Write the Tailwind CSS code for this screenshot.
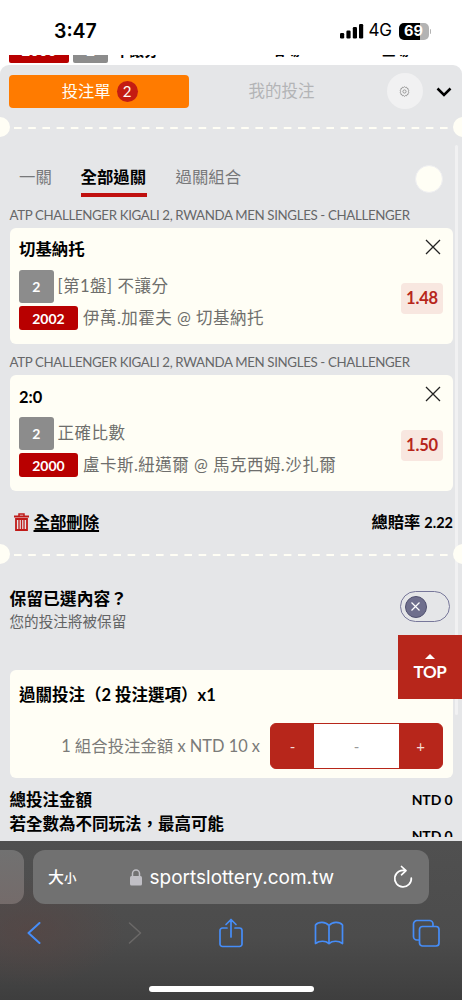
<!DOCTYPE html>
<html lang="zh-Hant">
<head>
<meta charset="utf-8">
<title>投注單</title>
<script src="https://cdn.jsdelivr.net/npm/@tailwindcss/browser@4"></script>
</head>
<body class="w-[462px] h-[1000px] overflow-hidden bg-white font-['Lato','Noto_Sans_CJK_TC',sans-serif] text-black">
<div class="flex h-[1000px] w-[462px] flex-col overflow-hidden whitespace-nowrap">

  <!-- Status bar -->
  <header class="flex h-[55px] shrink-0 items-center pl-[54px] pr-[31px] pt-[7px] font-['Inter',sans-serif]">
    <span class="mt-[2px] text-[19.5px] font-semibold">3:47</span>
    <svg class="ml-auto" width="24" height="16" viewBox="0 0 24 16"><rect x="0" y="10" width="4.2" height="5.5" rx="1.2"/><rect x="6.4" y="7.5" width="4.2" height="8" rx="1.2"/><rect x="12.8" y="4" width="4.2" height="11.500" rx="1.2"/><rect x="19" y="1" width="4.2" height="14.500" rx="1.2"/></svg>
    <span class="ml-[5px] w-[24px] text-[17px] tracking-[-0.300px]">4G</span>
    <span class="ml-[6px] flex h-[17px] w-[30px] items-center justify-center rounded-[5px] bg-linear-to-r from-black from-70% to-[#b3b3b3] to-70% text-[14.5px] font-bold text-white">69</span>
    <span class="ml-px h-[5px] w-[1.500px] rounded-r-full bg-[#b3b3b3]"></span>
  </header>

  <!-- Odds row scrolled beneath the status bar -->
  <div class="flex h-[10px] shrink-0 items-end overflow-hidden pl-[9px] text-[16px] font-bold">
    <span class="mb-[2px] flex h-[24px] w-[60px] items-center justify-center rounded-[2px] bg-[#b80000] pb-px text-[15px] text-white">2000</span>
    <span class="mb-[2px] ml-[4px] flex h-[24px] w-[35px] items-center justify-center rounded-[2px] bg-[#8c8c8c] pb-px text-[15px] text-white">2</span>
    <span class="mb-[4px] ml-[7px] w-[158px] text-[14.500px] leading-[20px]">不讓分</span>
    <span class="mb-[5px] w-[109px] text-[13.500px] leading-[20px]">客場</span>
    <span class="mb-[5px] text-[13.500px] leading-[20px]">主場</span>
  </div>

  <!-- Bet slip sheet -->
  <main class="relative isolate flex h-[776px] shrink-0 flex-col overflow-hidden rounded-t-[9px] bg-[#e5e6e8]">
    <div class="absolute left-[455px] top-[80px] -z-10 h-[570px] w-[3px] rounded-full bg-[#f1f1f2]"></div>

    <div class="flex h-[52px] items-center pl-[9.400px]">
      <div class="flex h-[33px] w-[179.500px] items-center justify-center gap-[6px] rounded-[4px] bg-[#ff7b00] pl-px text-[16.300px] text-[#fffdf5]">投注單<span class="flex size-[21px] items-center justify-center rounded-full bg-[#c41c12] text-[15px]">2</span></div>
      <span class="ml-[59.500px] w-[67px] text-[16.500px] text-[#b3b4b6]">我的投注</span>
      <span class="ml-[71.500px] flex size-[36px] items-center justify-center rounded-full bg-[#f1f1f2]">
        <svg width="11" height="11" viewBox="0 0 24 24" fill="none" stroke="#929292" stroke-width="2"><circle cx="12" cy="12" r="3.500"/><path d="m10.200 3.200 1.800-1.700 1.800 1.700 2.500-.6 1 2.300 2.500.7v2.600l1.900 1.800-1.200 2 1.200 2-1.900 1.800v2.600l-2.500.7-1 2.300-2.500-.6-1.800 1.700-1.800-1.700-2.500.6-1-2.300-2.500-.7v-2.600L2.300 14l1.200-2-1.200-2 1.900-1.800V5.600l2.500-.7 1-2.300z"/></svg>
      </span>
      <svg class="ml-[13px] mt-px" width="16" height="10" viewBox="0 0 16 10" fill="none" stroke="#000" stroke-width="2.500"><path d="M1.500 1.500 8 8l6.500-6.500"/></svg>
    </div>

    <div class="flex h-[20px] items-center">
      <span class="-ml-[10px] size-[20px] shrink-0 rounded-full bg-[#fffef5]"></span>
      <svg width="443" height="2" class="mt-[2px] shrink-0"><path d="M4 1H438" stroke="#fffef5" stroke-width="2" stroke-dasharray="7.600 6.600"/></svg>
      <span class="size-[20px] shrink-0 rounded-full bg-[#fffef5]"></span>
    </div>

    <div class="flex h-[69px] items-start pl-[19px] pr-[19px] pt-[27.500px] text-[16.400px] leading-[24px] text-[#77787a]">
      <span class="w-[61.500px]">一關</span>
      <span class="flex h-[32px] w-[66.500px] flex-col border-b-[4px] border-[#c0100f] font-bold text-black">全部過關</span>
      <span class="ml-[28.500px]">過關組合</span>
      <span class="ml-auto size-[28px] rounded-full border border-[#eeeef1] bg-[#fffef5]"></span>
    </div>

    <p class="h-[22px] pl-[9.500px] pt-px text-[13.300px] leading-[16px] tracking-[-0.360px] text-[#666768]">ATP CHALLENGER KIGALI 2, RWANDA MEN SINGLES - CHALLENGER</p>
    <section class="mx-[9.500px] flex h-[116px] shrink-0 justify-between rounded-[6px] bg-[#fffef5] pl-[9.500px] pr-[9.500px]">
      <div class="flex flex-col">
        <h3 class="mt-[9px] h-[33px] text-[16.400px] font-bold leading-[24px]">切基納托</h3>
        <div class="flex h-[33px] items-center"><b class="flex h-[33px] w-[34.500px] items-center justify-center rounded-[3px] bg-[#8c8c8c] text-[14px] text-white">2</b><span class="ml-[4px] text-[16.500px] tracking-[0.500px] text-[#6e6e6c]">[第1盤] 不讓分</span></div>
        <div class="mt-[3px] flex h-[24px] items-center"><b class="flex h-[24px] w-[59px] items-center justify-center rounded-[3px] bg-[#b80000] text-[14px] text-white">2002</b><span class="ml-[5px] text-[16.500px] tracking-[0.480px] text-[#6e6e6c]">伊萬.加霍夫 @ 切基納托</span></div>
      </div>
      <div class="flex flex-col items-end">
        <svg class="mr-[2px] mt-[11px]" width="16" height="16" viewBox="0 0 16 16" stroke="#222" stroke-width="1.300"><path d="m1 1 14 14M15 1 1 15"/></svg>
        <b class="mt-[28px] flex h-[31px] w-[42px] items-center justify-center rounded-[4px] bg-[#f8e7e0] text-[16.500px] tracking-[-0.200px] text-[#b7261b]">1.48</b>
      </div>
    </section>

    <p class="mt-[9px] h-[22px] pl-[9.500px] pt-px text-[13.300px] leading-[16px] tracking-[-0.360px] text-[#666768]">ATP CHALLENGER KIGALI 2, RWANDA MEN SINGLES - CHALLENGER</p>
    <section class="mx-[9.500px] flex h-[116px] shrink-0 justify-between rounded-[6px] bg-[#fffef5] pl-[9.500px] pr-[9.500px]">
      <div class="flex flex-col">
        <h3 class="mt-[10px] h-[32px] text-[16.400px] font-bold leading-[24px]">2:0</h3>
        <div class="flex h-[33px] items-center"><b class="flex h-[33px] w-[34.500px] items-center justify-center rounded-[3px] bg-[#8c8c8c] text-[14px] text-white">2</b><span class="ml-[4px] text-[16.500px] tracking-[0.500px] text-[#6e6e6c]">正確比數</span></div>
        <div class="mt-[3px] flex h-[24px] items-center"><b class="flex h-[24px] w-[59px] items-center justify-center rounded-[3px] bg-[#b80000] text-[14px] text-white">2000</b><span class="ml-[5px] text-[16.500px] tracking-[0.480px] text-[#6e6e6c]">盧卡斯.紐邁爾 @ 馬克西姆.沙扎爾</span></div>
      </div>
      <div class="flex flex-col items-end">
        <svg class="mr-[2px] mt-[11px]" width="16" height="16" viewBox="0 0 16 16" stroke="#222" stroke-width="1.300"><path d="m1 1 14 14M15 1 1 15"/></svg>
        <b class="mt-[28px] flex h-[31px] w-[42px] items-center justify-center rounded-[4px] bg-[#f8e7e0] text-[16.500px] tracking-[-0.200px] text-[#b7261b]">1.50</b>
      </div>
    </section>

    <div class="flex h-[53px] shrink-0 items-center pl-[14px] pr-[9px] pt-[9px] font-bold">
      <svg width="15" height="18" viewBox="0 0 15 18" fill="none" stroke="#c01a18"><path d="M0 3.500h15" stroke-width="2"/><path d="M5 3V1h5v2" stroke-width="1.500"/><path d="M2 6v11h11V6z" stroke-width="1.800"/><path d="M5 6v11M7.500 6v11M10 6v11" stroke-width="1.300"/></svg>
      <span class="ml-[4.500px] text-[16.400px] underline decoration-[1.500px] underline-offset-[2px]">全部刪除</span>
      <span class="ml-auto text-[16.300px]">總賠率 <span class="text-[14.500px]">2.22</span></span>
    </div>

    <div class="flex h-[20px] shrink-0 items-center">
      <span class="-ml-[10px] size-[20px] shrink-0 rounded-full bg-[#fffef5]"></span>
      <svg width="443" height="2" class="mt-[2px] shrink-0"><path d="M4 1H438" stroke="#fffef5" stroke-width="2" stroke-dasharray="7.600 6.600"/></svg>
      <span class="size-[20px] shrink-0 rounded-full bg-[#fffef5]"></span>
    </div>

    <div class="flex h-[106px] shrink-0 justify-between pl-[9.500px] pr-[12px] pt-[23px]">
      <div>
        <h3 class="text-[16.800px] font-bold leading-[24px]">保留已選內容？</h3>
        <p class="pt-px text-[14.600px] leading-[20px] text-[#636465]">您的投注將被保留</p>
      </div>
      <div class="mt-[4px] flex h-[31px] w-[50px] items-center rounded-full border-[1.500px] border-[#77779a] pl-[3.500px]">
        <span class="flex size-[22px] items-center justify-center rounded-full border border-[#50506f] bg-[#6f6f8d]"><svg width="9" height="9" viewBox="0 0 9 9" stroke="#fff" stroke-width="1.200"><path d="m.5.5 8 8m0-8-8 8"/></svg></span>
      </div>
    </div>

    <section class="mx-[9.500px] h-[108px] shrink-0 rounded-[6px] bg-[#fffef5] pl-[9.500px] pr-[9.500px] pt-[13px]">
      <h3 class="h-[40px] text-[16.500px] font-bold leading-[24px]">過關投注（2 投注選項）x1</h3>
      <div class="flex h-[46px] items-center justify-end">
        <span class="mr-[10px] text-[16.400px] text-[#7b7b79]">1 組合投注金額 x NTD 10 x</span>
        <div class="flex h-[46px] w-[173px] overflow-hidden rounded-[6px] border border-[#b7261b] bg-[#b7261b] text-[15px] text-[#f4dcd7]">
          <span class="flex w-[43px] items-center justify-center">-</span>
          <span class="flex flex-1 items-center justify-center bg-white text-[#999]">-</span>
          <span class="flex w-[43px] items-center justify-center">+</span>
        </div>
      </div>
    </section>

    <div class="flex h-[59px] shrink-0 justify-between overflow-hidden pl-[9.500px] pr-[9.500px] pt-[10px] text-[16.500px] font-bold leading-[24px]">
      <div>總投注金額<br>若全數為不同玩法，最高可能</div>
      <div class="h-[49px] text-[14px] tracking-[-0.100px]">NTD 0<div class="mt-[12px] h-[13px] overflow-hidden">NTD 0</div></div>
    </div>

    <div class="absolute left-[398px] top-[569.500px] flex h-[64.500px] w-[64px] flex-col items-center bg-[#b7261b] pt-[19px] text-[17px] font-bold leading-[26px] tracking-[-0.300px] text-white">
      <svg class="shrink-0" width="10" height="5" viewBox="0 0 10 5" fill="#fff"><path d="M0 5 5 0l5 5z"/></svg>TOP
    </div>
  </main>

  <!-- Browser toolbar -->
  <footer class="flex h-[159px] shrink-0 flex-col bg-[radial-gradient(ellipse_95px_55px_at_30px_90px,#59444299,#59444200),linear-gradient(#505050,#4c4c4c_60%,#3e3e3e)]">
    <div class="mt-[9px] flex h-[54px] shrink-0 items-center">
      <span class="h-[54px] w-[24px] rounded-r-[12px] bg-linear-to-b from-[#717171] to-[#746b6a]"></span>
      <div class="ml-[9px] flex h-[54px] w-[396px] items-center rounded-[12px] bg-[#717171] pl-[15px] pr-[16px] text-white">
        <span class="w-[82px] text-[16px] font-medium">大<span class="text-[12.500px]">小</span></span>
        <svg class="mt-px" width="12" height="17" viewBox="0 0 12 17" fill="none"><path d="M2.500 8V4.500a3.500 3.500 0 0 1 7 0V8" stroke="#c0bfc5" stroke-width="1.500"/><rect y="7" width="12" height="9.500" rx="1.500" fill="#c0bfc5"/></svg>
        <span class="ml-[7.500px] mt-[3px] font-['Inter',sans-serif] text-[19px]">sportslottery.com.tw</span>
        <svg class="ml-auto" width="20" height="24" viewBox="0 0 20 24" fill="none" stroke="#fff" stroke-width="1.700" stroke-linecap="round" stroke-linejoin="round"><path d="M12.500 5.700A8.300 8.300 0 1 0 18.300 13M8.500 1.500l4.500 4.200-4.500 4.100"/></svg>
      </div>
    </div>
    <div class="mt-[13px] flex h-[32px] shrink-0 items-center text-[#468df8]">
      <svg class="ml-[27px]" width="14" height="22" viewBox="0 0 14 22" fill="none" stroke="currentColor" stroke-width="2" stroke-linecap="round" stroke-linejoin="round"><path d="M12.500 1 1.500 11l11 10"/></svg>
      <svg class="ml-[87px]" width="14" height="22" viewBox="0 0 14 22" fill="none" stroke="#6b6968" stroke-width="1.500" stroke-linecap="round" stroke-linejoin="round"><path d="m1.500 1 11 10-11 10"/></svg>
      <svg class="ml-[76px]" width="26" height="30" viewBox="0 0 26 30" fill="none" stroke="currentColor" stroke-width="1.700" stroke-linecap="round" stroke-linejoin="round"><path d="M9 10H4.500a2.500 2.500 0 0 0-2.500 2.500V26a2.500 2.500 0 0 0 2.500 2.500h17A2.500 2.500 0 0 0 24 26V12.500a2.500 2.500 0 0 0-2.500-2.500H17M13 19V2M8 6.500 13 1.500l5 5"/></svg>
      <svg class="ml-[70px]" width="30" height="24" viewBox="0 0 30 24" fill="none" stroke="currentColor" stroke-width="1.700" stroke-linejoin="round"><path d="M15 4.500C11.500.5 4.500.5 1.500 4v18.500c4-3 10-3 13.500 0 3.500-3 9.500-3 13.500 0V4c-3-3.500-10-3.500-13.500.5zm0 0v18"/></svg>
      <svg class="ml-[68px]" width="28" height="28" viewBox="0 0 28 28" fill="none" stroke="currentColor" stroke-width="1.700"><path d="M7.500 21H5a3.500 3.500 0 0 1-3.500-3.500V5A3.500 3.500 0 0 1 5 1.500h12.500A3.500 3.500 0 0 1 21 5v2"/><rect x="7.500" y="7.500" width="19.500" height="19.500" rx="3"/></svg>
    </div>
    <div class="ml-[149px] mt-[36.500px] h-[6px] w-[165px] shrink-0 rounded-full bg-white"></div>
  </footer>
</div>
</body>
</html>
